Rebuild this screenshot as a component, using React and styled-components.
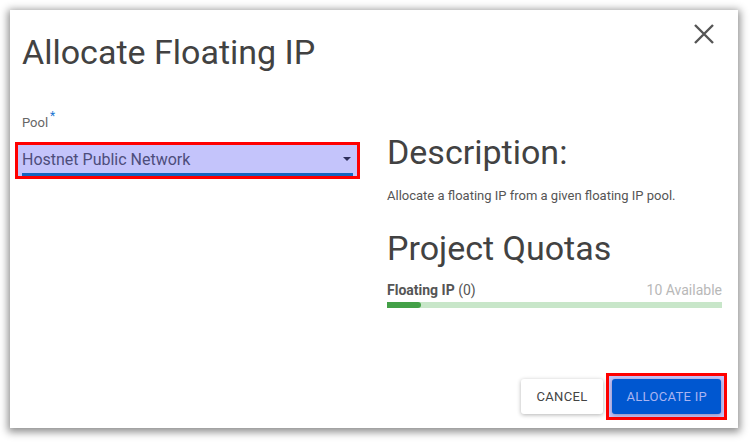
import React from 'react';
import styled, { createGlobalStyle } from 'styled-components';

const Global = createGlobalStyle`
  html, body {
    margin: 0;
    padding: 0;
    background: #ffffff;
    font-family: Roboto, 'Noto Sans', Arial, sans-serif;
  }
`;

const Page = styled.div`
  width: 751px;
  height: 443px;
  padding: 10px 13px 15px 10px;
  box-sizing: border-box;
`;

const Dialog = styled.div`
  height: 100%;
  background: #fff;
  box-shadow: 0 2px 8px 2px rgba(0, 0, 0, 0.45);
  display: flex;
  flex-direction: column;
  padding: 0 16px 0 12px;
  box-sizing: border-box;
`;

const Header = styled.div`
  display: flex;
  justify-content: space-between;
  align-items: flex-start;
  padding-top: 22px;
`;

const Title = styled.h1`
  margin: 0;
  font-size: 34px;
  font-weight: 400;
  line-height: 40px;
  color: #424242;
`;

const CloseButton = styled.button`
  border: none;
  background: none;
  padding: 0;
  margin: -10px 6px 0 0;
  width: 24px;
  height: 24px;
  cursor: pointer;
`;

const Body = styled.div`
  flex: 1;
  display: grid;
  grid-template-columns: 334px 335px;
  column-gap: 31px;
  align-items: start;
  padding-top: 43px;
`;

const Field = styled.div`
  display: flex;
  flex-direction: column;
`;

const Label = styled.label`
  display: block;
  font-size: 13px;
  color: #666;
  line-height: 16px;
  height: 27px;
  sup {
    color: #1976d2;
    font-size: 12px;
    line-height: 0;
    margin-left: 2px;
    position: relative;
    top: -2px;
  }
`;

const Highlight = styled.div`
  border: 3px solid #ff0000;
  margin-left: -7px;
  margin-right: -4px;
  background: #c4c4fb;
  padding: 0 4px 0 4px;
`;

const Select = styled.div`
  height: 28px;
  display: flex;
  align-items: center;
  justify-content: space-between;
  border-bottom: 3px solid #1565c0;
  font-size: 16px;
  color: #4d4d7b;
`;

const Caret = styled.span`
  width: 0;
  height: 0;
  border-left: 4px solid transparent;
  border-right: 4px solid transparent;
  border-top: 4px solid #2d2d5a;
  margin-right: 2px;
`;

const Side = styled.div`
  display: flex;
  flex-direction: column;
  margin-top: 17px;
`;

const Heading = styled.h2`
  margin: 0;
  font-size: 34px;
  font-weight: 400;
  line-height: 40px;
  color: #424242;
`;

const Text = styled.p`
  margin: 16px 0 24px;
  font-size: 13px;
  color: #555;
  line-height: 16px;
`;

const QuotaRow = styled.div`
  display: flex;
  justify-content: space-between;
  font-size: 14px;
  margin-top: 14px;
  line-height: 16px;
`;

const QuotaName = styled.span`
  color: #555;
  b {
    font-weight: 700;
  }
`;

const Available = styled.span`
  color: #b8b8b8;
`;

const Bar = styled.div`
  margin-top: 4px;
  height: 6px;
  background: #c8e6c9;
`;

const Fill = styled.div`
  height: 100%;
  background: #43a047;
  border-radius: 0 3px 3px 0;
`;

const Footer = styled.div`
  display: flex;
  justify-content: flex-end;
  align-items: center;
  gap: 3px;
  padding-bottom: 8px;
  margin-right: -5px;
`;

const Button = styled.button`
  font-family: Roboto, Arial, sans-serif;
  font-size: 13px;
  letter-spacing: 0.3px;
  height: 35px;
  padding: ${p => (p.$primary ? '0 14px' : '0 16px')};
  border: none;
  border-radius: 3px;
  cursor: pointer;
  background: ${p => (p.$primary ? '#0057d0' : '#fff')};
  color: ${p => (p.$primary ? '#a9b4f0' : '#444')};
  box-shadow: 0 1px 4px rgba(0, 0, 0, 0.3);
`;

const ButtonFrame = styled.div`
  border: 3px solid #ff0000;
  background: #c4c4fb;
  padding: 3px;
  display: flex;
`;

export default function App() {
  const used = 1;
  const total = 10;
  return (
    <Page>
      <Global />
      <Dialog>
        <Header>
          <Title>Allocate Floating IP</Title>
          <CloseButton aria-label="close">
            <svg width="24" height="24" viewBox="0 0 24 24">
              <path d="M3 3 L21 21 M21 3 L3 21" stroke="#555" strokeWidth="2.4" fill="none" />
            </svg>
          </CloseButton>
        </Header>
        <Body>
          <Field>
            <Label>
              Pool<sup>*</sup>
            </Label>
            <Highlight>
              <Select>
                <span>Hostnet Public Network</span>
                <Caret />
              </Select>
            </Highlight>
          </Field>
          <Side>
            <Heading>Description:</Heading>
            <Text>Allocate a floating IP from a given floating IP pool.</Text>
            <Heading>Project Quotas</Heading>
            <QuotaRow>
              <QuotaName>
                <b>Floating IP</b> (0)
              </QuotaName>
              <Available>10 Available</Available>
            </QuotaRow>
            <Bar>
              <Fill style={{ width: `${(used / total) * 100}%` }} />
            </Bar>
          </Side>
        </Body>
        <Footer>
          <Button>CANCEL</Button>
          <ButtonFrame>
            <Button $primary>ALLOCATE IP</Button>
          </ButtonFrame>
        </Footer>
      </Dialog>
    </Page>
  );
}
